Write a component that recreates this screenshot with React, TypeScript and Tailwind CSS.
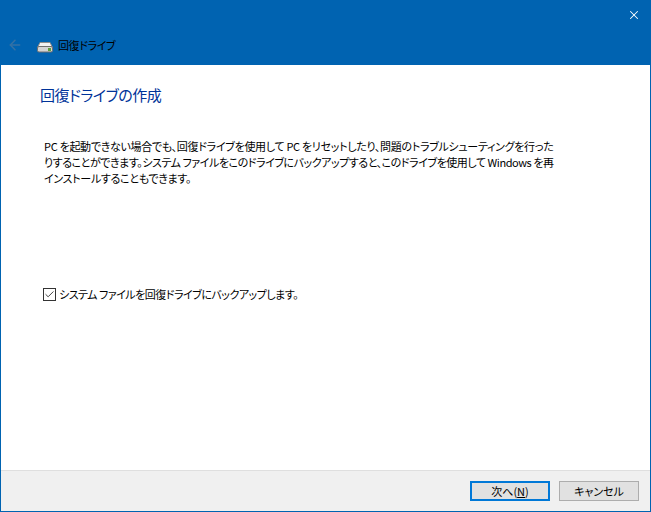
import React from 'react';
import { ArrowLeft, X, Check } from 'lucide-react';

const font = "font-['Noto_Sans_CJK_JP','Noto_Sans',sans-serif] [font-feature-settings:'palt']";

function DriveIcon() {
  return (
    <svg width="16" height="12" viewBox="0 0 16 12">
      <path d="M3 1.5h10l2.5 5H.5z" fill="#f2f2f2" stroke="#8d8d8d" />
      <rect x="0.5" y="5.5" width="15" height="5.5" rx="1.5" fill="#d4d4d4" stroke="#6f6f6f" />
      <rect x="11" y="7" width="3" height="3" fill="#5f9e3a" />
    </svg>
  );
}

export default function App() {
  return (
    <div className={`${font} w-[651px] h-[512px] flex flex-col bg-white border-x border-b border-[#0063b1] overflow-hidden`}>
      {/* Title bar */}
      <header className="h-[65px] shrink-0 -mx-px bg-[#0063b1] flex flex-col">
        <div className="h-[30px] flex justify-end items-center pr-[10px]">
          <X className="w-[14px] h-[14px] text-white" strokeWidth={1.75} />
        </div>
        <div className="flex items-center h-[30px]">
          <ArrowLeft className="w-[16px] h-[16px] ml-[7px] text-[#3572a5]" strokeWidth={2.25} />
          <div className="ml-[14px] mt-[4px]"><DriveIcon /></div>
          <span className="ml-[5px] text-[11px] tracking-[-0.4px] text-black leading-none">回復ドライブ</span>
        </div>
      </header>

      {/* Content */}
      <main className="flex-1 flex flex-col pl-[39px]">
        <h1 className="mt-[20px] text-[15px] tracking-[-0.5px] leading-[20px] text-[#003399] font-normal">回復ドライブの作成</h1>
        <p className="mt-[33px] ml-[4px] whitespace-nowrap text-[11px] tracking-[-0.3px] leading-[16px] text-black">
          PC を起動できない場合でも、回復ドライブを使用して PC をリセットしたり、問題のトラブルシューティングを行った<br />
          <span className="tracking-[-0.45px]">りすることができます。システム ファイルをこのドライブにバックアップすると、このドライブを使用して Windows を再</span><br />
          インストールすることもできます。
        </p>
        <label className="mt-[100px] ml-[3px] flex items-center text-[11px] tracking-[-0.5px] leading-[16px] text-black">
          <span className="w-[13px] h-[13px] border border-[#333] bg-white flex items-center justify-center">
            <Check className="w-[11px] h-[11px] text-[#333]" strokeWidth={2} />
          </span>
          <span className="ml-[3px]">システム ファイルを回復ドライブにバックアップします。</span>
        </label>
      </main>

      {/* Footer */}
      <footer className="h-[41px] shrink-0 bg-[#f0f0f0] border-t border-[#dfdfdf] flex items-start justify-end pt-[10px] pr-[11px] gap-[9px]">
        <button className="w-[80px] h-[20px] bg-[#e1e1e1] border-2 border-[#0078d7] text-[11px] leading-none text-black">
          次へ(<span className="underline">N</span>)
        </button>
        <button className="w-[80px] h-[20px] bg-[#e1e1e1] border border-[#adadad] text-[11px] leading-none text-black">
          キャンセル
        </button>
      </footer>
    </div>
  );
}
